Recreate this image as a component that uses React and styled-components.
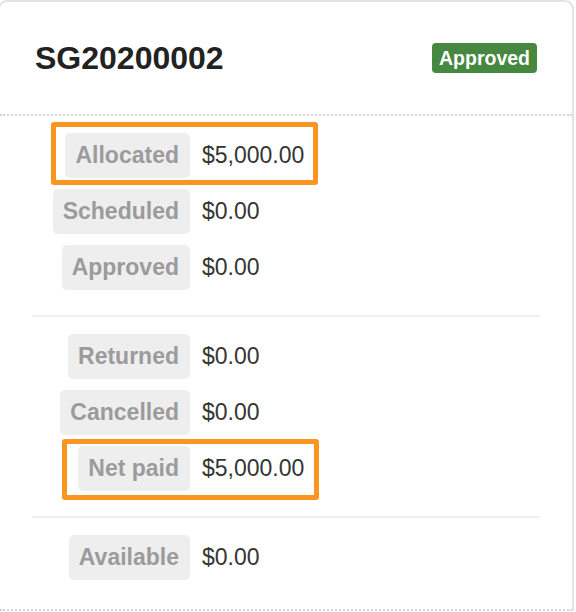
import React from 'react';
import styled, { createGlobalStyle } from 'styled-components';

const GlobalStyle = createGlobalStyle`
  html, body {
    margin: 0;
    padding: 0;
    background: #ffffff;
    overflow: hidden;
  }
  body {
    font-family: 'Liberation Sans', Helvetica, Arial, sans-serif;
  }
`;

const Card = styled.div`
  width: 576px;
  margin-left: -2px;
  box-sizing: border-box;
  border: 2px solid #e3e3e3;
  border-bottom: none;
  border-radius: 9px 9px 0 0;
  background: #fff;
`;

const Header = styled.div`
  display: flex;
  align-items: center;
  justify-content: space-between;
  height: 112px;
  padding: 0 35px 0 35px;
  border-bottom: 2px dotted #d4d4d4;
`;

const Title = styled.h1`
  margin: 0;
  font-size: 32px;
  font-weight: 700;
  color: #222;
`;

const Badge = styled.span`
  display: inline-block;
  height: 30px;
  line-height: 30px;
  padding: 0 7px;
  border-radius: 4px;
  background: #46883f;
  color: #fff;
  font-size: 19.5px;
  font-weight: 700;
`;

const Section = styled.div`
  display: flex;
  flex-direction: column;
  gap: 11px;
  padding: 17px 0 ${p => (p.$last ? '29px' : '25px')};
`;

const Divider = styled.div`
  height: 2px;
  margin: 0 32px;
  background: #efefef;
`;

const Footer = styled.div`
  border-top: 2px dotted #d4d4d4;
`;

const Row = styled.div`
  position: relative;
  display: grid;
  grid-template-columns: 190px auto;
  column-gap: 12px;
  align-items: center;
`;

const Label = styled.span`
  justify-self: end;
  height: 45px;
  line-height: 45px;
  padding: 0 11px 0 10px;
  border-radius: 5px;
  background: #eeeeee;
  color: #9b9b9b;
  font-size: 23px;
  font-weight: 700;
`;

const Value = styled.span`
  font-size: 23px;
  line-height: 45px;
  color: #353535;
`;

const Highlight = styled.div`
  position: absolute;
  top: ${p => p.$top}px;
  left: ${p => p.$left}px;
  width: ${p => p.$width}px;
  height: ${p => p.$height}px;
  box-sizing: border-box;
  border: 5px solid #fa9522;
  border-radius: 3px;
  pointer-events: none;
`;

const sections = [
  [
    { label: 'Allocated', value: '$5,000.00', mark: { top: -11, left: 51, width: 267, height: 63 } },
    { label: 'Scheduled', value: '$0.00' },
    { label: 'Approved', value: '$0.00' },
  ],
  [
    { label: 'Returned', value: '$0.00' },
    { label: 'Cancelled', value: '$0.00' },
    { label: 'Net paid', value: '$5,000.00', mark: { top: -7, left: 62, width: 257, height: 61 } },
  ],
  [{ label: 'Available', value: '$0.00' }],
];

const App = () => (
  <>
    <GlobalStyle />
    <Card>
      <Header>
        <Title>SG20200002</Title>
        <Badge>Approved</Badge>
      </Header>
      {sections.map((rows, i) => (
        <React.Fragment key={i}>
          {i > 0 && <Divider />}
          <Section $last={i === sections.length - 1}>
            {rows.map(r => (
              <Row key={r.label}>
                <Label>{r.label}</Label>
                <Value>{r.value}</Value>
                {r.mark && (
                  <Highlight
                    $top={r.mark.top}
                    $left={r.mark.left}
                    $width={r.mark.width}
                    $height={r.mark.height}
                  />
                )}
              </Row>
            ))}
          </Section>
        </React.Fragment>
      ))}
      <Footer />
    </Card>
  </>
);

export default App;
